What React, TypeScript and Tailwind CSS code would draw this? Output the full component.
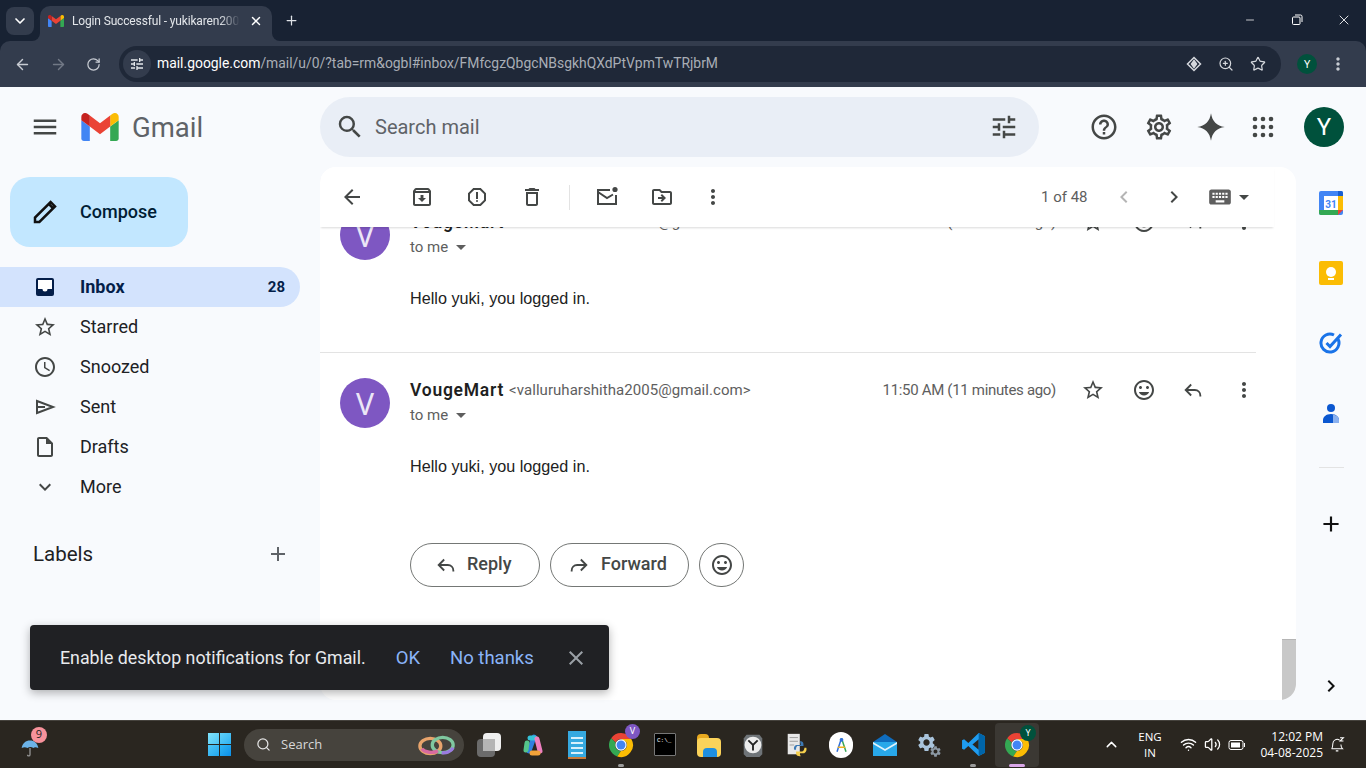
import { MdArrowBack, MdArrowDropDown, MdChevronLeft, MdChevronRight, MdClose, MdExpandMore, MdKeyboard, MdMenu, MdMoreVert, MdOutlineArchive, MdOutlineDelete, MdOutlineDriveFileMove, MdOutlineHelpOutline, MdOutlineInsertDriveFile, MdOutlineInsertEmoticon, MdOutlineReport, MdOutlineSettings, MdOutlineStarBorder, MdAccessTime, MdOutlineTune, MdSearch, MdAdd, MdSettings } from 'react-icons/md';
import { ChevronDown, ChevronUp, Plus, X, Minus, Search as SearchIcon, ArrowLeft, ArrowRight, RotateCw, Star, ZoomIn, Wifi, Volume2 } from 'lucide-react';

const sans = "font-['Roboto',sans-serif]";
const ui = "font-['Open_Sans',sans-serif]";

function GmailLogo() {
  return (
    <svg viewBox="52 42 88 66" className="h-[28px] w-[38px]">
      <path fill="#4285f4" d="M58 108h14V74L52 59v43c0 3.32 2.69 6 6 6" />
      <path fill="#34a853" d="M120 108h14c3.32 0 6-2.69 6-6V59l-20 15" />
      <path fill="#fbbc04" d="M120 48v26l20-15v-8c0-7.42-8.47-11.65-14.4-7.2" />
      <path fill="#ea4335" d="M72 74V48l24 18 24-18v26L96 92" />
      <path fill="#c5221f" d="M52 51v8l20 15V48l-5.6-4.2c-5.94-4.45-14.4-.22-14.4 7.2" />
    </svg>
  );
}

function ChromeLogo({ size = 26 }: { size?: number }) {
  return (
    <svg viewBox="0 0 48 48" width={size} height={size}>
      <path fill="#ea4335" d="M24 2a22 22 0 0 1 19 11H24a11 11 0 0 0-10 6.5L5.8 11.5A22 22 0 0 1 24 2z" />
      <path fill="#34a853" d="M5.8 11.5 14 19.5 A11 11 0 0 0 24 35 L17 45 A22 22 0 0 1 5.8 11.5z" />
      <path fill="#fbbc04" d="M43 13a22 22 0 0 1-26 32l7-10a11 11 0 0 0 9.5-16.5L24 13z" />
      <circle cx="24" cy="24" r="10.5" fill="#fff" />
      <circle cx="24" cy="24" r="8.2" fill="#4285f4" />
    </svg>
  );
}

function ReplyIcon({ className = '' }: { className?: string }) {
  return (
    <svg viewBox="0 0 24 24" className={className} fill="none" stroke="currentColor" strokeWidth="2">
      <path d="M10 6 4 12l6 6" />
      <path d="M4.5 12H14c3.5 0 6 2.5 6 6v1" />
    </svg>
  );
}

function ForwardIcon({ className = '' }: { className?: string }) {
  return (
    <svg viewBox="0 0 24 24" className={className} fill="none" stroke="currentColor" strokeWidth="2">
      <path d="m14 6 6 6-6 6" />
      <path d="M19.5 12H10c-3.5 0-6 2.5-6 6v1" />
    </svg>
  );
}

function UnreadIcon() {
  return (
    <svg viewBox="0 0 24 24" className="h-6 w-6 text-[#444746]" fill="none" stroke="currentColor" strokeWidth="2">
      <path d="M15 5H3v14h18v-9" />
      <path d="m3 7 9 6 6-3.5" />
      <circle cx="20" cy="4.5" r="2.6" fill="currentColor" stroke="none" />
    </svg>
  );
}

function Message({ divider }: { divider?: boolean }) {
  return (
    <div className={`flex w-[936px] shrink-0 pt-[25px] ${divider ? 'h-[168px] border-b border-[#e3e3e3]' : 'h-[190px]'}`}>
      <div className="ml-5 mr-5 flex h-[50px] w-[50px] shrink-0 items-center justify-center rounded-full bg-[#7e57c2] text-[30px] text-[#ece6f6]">V</div>
      <div className="flex-1">
        <div className="flex h-6 items-center">
          <span className={`${sans} text-[17.5px] font-semibold tracking-[0.75px] text-[#1f1f1f]`}>VougeMart</span>
          <span className={`${sans} ml-[5px] text-[15px] tracking-[0.05px] text-[#5e5e5e]`}>&lt;valluruharshitha2005@gmail.com&gt;</span>
          <span className={`${sans} ml-auto text-[15px] tracking-[-0.32px] text-[#5e5e5e]`}>11:50 AM (11 minutes ago)</span>
          <div className="ml-[24px] flex w-[176px] shrink-0 items-center text-[#444746]">
            <MdOutlineStarBorder className="ml-[1px] h-6 w-6" />
            <MdOutlineInsertEmoticon className="ml-[27px] h-6 w-6" />
            <ReplyIcon className="ml-[26px] h-[22px] w-[22px]" />
            <MdMoreVert className="ml-[28px] h-6 w-6" />
          </div>
        </div>
        <div className={`${sans} flex h-[26px] items-center text-[15px] text-[#5e5e5e]`}>
          to me
          <MdArrowDropDown className="ml-[1px] h-6 w-6" />
        </div>
        <p className="mt-[28px] font-['Liberation_Sans',sans-serif] text-[16.2px] leading-[20px] text-[#222222]">Hello yuki, you logged in.</p>
      </div>
    </div>
  );
}

function NavItem({ icon, label }: { icon: React.ReactNode; label: string }) {
  return (
    <div className="flex h-10 w-[300px] items-center">
      <div className="flex w-[80px] justify-center pl-[10px] text-[#444746]">{icon}</div>
      <span className={`${sans} -mt-px text-[18px] text-[#202124]`}>{label}</span>
    </div>
  );
}

function TaskIcon({ children, dot, active }: { children: React.ReactNode; dot?: boolean; active?: boolean }) {
  return (
    <div className={`relative flex h-[44px] w-11 items-center justify-center rounded ${active ? 'bg-[#3b3833]' : ''}`}>
      {children}
      {dot && <span className="absolute bottom-[0px] h-[3px] w-[6px] rounded-full bg-[#9b9b9b]" />}
      {active && <span className="absolute bottom-[0px] h-[3px] w-4 rounded-full bg-[#d9a6e8]" />}
    </div>
  );
}

function BrowserChrome() {
  return (
    <div className="h-[87px] shrink-0 bg-[#182233]">
      <div className="flex h-[41px] items-end pl-[6px]">
        <div className="mb-[6px] flex h-[28px] w-[28px] items-center justify-center rounded-lg bg-[#333c4d] text-white">
          <ChevronDown className="h-4 w-4" strokeWidth={2.5} />
        </div>
        <div className="relative ml-[6px] flex h-[35px] w-[232px] items-center rounded-t-[10px] bg-[#333c4d] pb-[6px] pl-[8px]">
          <div className="absolute bottom-0 left-[-8px] h-2 w-2 overflow-hidden"><div className="h-4 w-4 -translate-x-2 -translate-y-2 rounded-full shadow-[0_0_0_8px_#333c4d]" /></div>
          <div className="absolute bottom-0 right-[-8px] h-2 w-2 overflow-hidden"><div className="h-4 w-4 -translate-y-2 rounded-full shadow-[0_0_0_8px_#333c4d]" /></div>
          <svg viewBox="52 42 88 66" className="h-[12px] w-[16px]">
            <path fill="#4285f4" d="M58 108h14V74L52 59v43c0 3.32 2.69 6 6 6" />
            <path fill="#34a853" d="M120 108h14c3.32 0 6-2.69 6-6V59l-20 15" />
            <path fill="#fbbc04" d="M120 48v26l20-15v-8c0-7.42-8.47-11.65-14.4-7.2" />
            <path fill="#ea4335" d="M72 74V48l24 18 24-18v26L96 92" />
            <path fill="#c5221f" d="M52 51v8l20 15V48l-5.6-4.2c-5.94-4.45-14.4-.22-14.4 7.2" />
          </svg>
          <span className={`${sans} ml-2 w-[168px] overflow-hidden whitespace-nowrap text-[12px] tracking-[-0.15px] text-[#e3e6ea] [mask-image:linear-gradient(90deg,#000_88%,transparent)]`}>Login Successful - yukikaren2005@gmail.com</span>
          <X className="ml-[9px] h-[14px] w-[14px] text-white" strokeWidth={2.5} />
        </div>
        <Plus className="mb-[13px] ml-[12px] h-[15px] w-[15px] text-[#dfe3e8]" strokeWidth={2} />
        <div className="ml-auto mb-[13px] flex items-center text-white">
          <Minus className="h-[12px] w-[12px]" strokeWidth={1.5} />
          <svg viewBox="0 0 12 12" className="ml-[35px] h-3 w-3" fill="none" stroke="currentColor"><rect x="1.5" y="3" width="7.5" height="7.5" rx="1" /><path d="M4 1h5.5a1.5 1.5 0 0 1 1.5 1.5V8" /></svg>
          <X className="ml-[33px] mr-[14px] h-[16px] w-[16px]" strokeWidth={1.3} />
        </div>
      </div>
      <div className="flex h-[46px] items-center rounded-t-[10px] bg-[#333c4d] pl-[14px]">
        <ArrowLeft className="h-[17px] w-[17px] text-[#c8ccd3]" strokeWidth={2} />
        <ArrowRight className="ml-[19px] h-[17px] w-[17px] text-[#727986]" strokeWidth={2} />
        <RotateCw className="ml-[19px] h-[15px] w-[15px] text-[#c8ccd3]" strokeWidth={2} />
        <div className="ml-[18px] flex h-[36px] w-[1162px] items-center rounded-full bg-[#1f2838] pl-[4px]">
          <div className="flex h-[28px] w-[28px] items-center justify-center rounded-full bg-[#333c4d]">
            <MdOutlineTune className="h-4 w-4 text-[#e3e6ea]" />
          </div>
          <span className={`${sans} mb-[2px] ml-[6px] text-[13.9px] text-[#a9aeb6]`}><span className="text-white">mail.google.com</span>/mail/u/0/?tab=rm&amp;ogbl#inbox/FMfcgzQbgcNBsgkhQXdPtVpmTwTRjbrM</span>
          <div className="ml-auto mr-[15px] flex items-center text-[#d5d8dd]">
            <svg viewBox="0 0 16 16" className="h-4 w-4" fill="none" stroke="currentColor" strokeWidth="1.5"><path d="M8 1.5 14.5 8 8 14.5 1.5 8z" /><path d="M8 4.5 10.5 8 8 11.5 5.5 8z" fill="currentColor" /></svg>
            <ZoomIn className="ml-[16px] h-[16px] w-[16px]" strokeWidth={1.8} />
            <Star className="ml-[16px] h-[16px] w-[16px]" strokeWidth={1.8} />
          </div>
        </div>
        <div className="ml-[16px] flex h-5 w-5 items-center justify-center rounded-full bg-[#00513c] text-[11px] text-white">Y</div>
        <MdMoreVert className="ml-[11px] h-[20px] w-[20px] text-[#c8ccd3]" />
      </div>
    </div>
  );
}

function Taskbar() {
  return (
    <div className="flex h-12 shrink-0 items-center border-t border-[#45423d] bg-[#2a2620] text-white">
      <div className="relative ml-[20px] w-[188px] shrink-0">
        <svg viewBox="0 0 22 24" className="mt-[6px] h-[20px] w-[20px]" fill="none"><path d="M1 12C2 6 6 3 11 3s9 3 10 9c-3-1.500-5-1-6 0-2-1.500-5-1.500-7 0-2-1-4-1.500-7 0z" fill="#6cb3e8" /><path d="M11 12v8c0 2 -3 2-3 0" stroke="#999" strokeWidth="1.500" /></svg>
        <span className="absolute left-[11px] top-[-5px] flex h-4 w-4 items-center justify-center rounded-full bg-[#f7929b] font-['Open_Sans',sans-serif] text-[11px] text-[#222]">9</span>
      </div>
      <div className="grid h-[23px] w-[23px] shrink-0 grid-cols-2 gap-[1px]">
        <span className="bg-gradient-to-br from-[#7fe3fb] to-[#4cc4f5]" />
        <span className="bg-gradient-to-br from-[#5fd0f8] to-[#2cb2f2]" />
        <span className="bg-gradient-to-br from-[#4ec6f6] to-[#1fa8f0]" />
        <span className="bg-gradient-to-br from-[#2eb6f3] to-[#0a8fe8]" />
      </div>
      <div className="ml-[13px] flex h-8 w-[220px] shrink-0 items-center rounded-full bg-[#46433d] pl-[12px]">
        <SearchIcon className="h-[15px] w-[15px] text-[#e5e5e5]" strokeWidth={2} />
        <span className={`${ui} ml-[10px] text-[13px] text-[#d8d8d8]`}>Search</span>
        <svg viewBox="0 0 40 24" className="ml-auto mr-[8px] h-[24px] w-[38px]" fill="none" strokeWidth="3.500">
          <ellipse cx="13" cy="13" rx="11" ry="8" stroke="#e8a46c" />
          <ellipse cx="26" cy="12" rx="11" ry="8" stroke="#7fc8a0" />
          <path d="M4 16c3 4 12 5 17 2" stroke="#d86aa0" />
          <path d="M25 20c4 1 10-1 12-5" stroke="#9a7ae0" />
        </svg>
      </div>
      <div className="ml-[3px] flex shrink-0 items-center">
        <TaskIcon>
          <div className="relative h-[24px] w-[24px]">
            <span className="absolute bottom-0 left-0 h-[18px] w-[18px] rounded-sm bg-[#6b6b6b]" />
            <span className="absolute right-0 top-0 h-[18px] w-[18px] rounded-sm bg-[#efefef]" />
            <span className="absolute left-[6px] top-[6px] h-[12px] w-[12px] bg-[#b5b5b5]" />
          </div>
        </TaskIcon>
        <TaskIcon>
          <svg viewBox="0 0 24 24" className="h-[24px] w-[24px]" fill="none" strokeWidth="5" strokeLinecap="round">
            <path d="M13 4 8 18" stroke="#2f7fe0" />
            <path d="M9 5h5" stroke="#35c2d8" />
            <path d="M16 6 19 18" stroke="#ee7fc0" />
            <path d="M11 20h6" stroke="#f2a33a" />
            <path d="M6 10 5 17" stroke="#55c58a" />
          </svg>
        </TaskIcon>
        <TaskIcon>
          <div className="flex h-[28px] w-[18px] flex-col gap-[3px] border-b-2 border-[#c97a3a] bg-[#36a9e0] px-[3px] pt-[6px]">
            <span className="h-[2px] bg-[#d8f0fb]" /><span className="h-[2px] bg-[#d8f0fb]" /><span className="h-[2px] bg-[#d8f0fb]" /><span className="h-[2px] bg-[#d8f0fb]" />
          </div>
        </TaskIcon>
        <TaskIcon dot>
          <ChromeLogo />
          <span className="absolute right-[3px] top-[1px] flex h-[15px] w-[15px] items-center justify-center rounded-full bg-[#7e57c2] text-[9px]">V</span>
        </TaskIcon>
        <TaskIcon>
          <div className="h-[23px] w-[22px] rounded-[1px] border border-[#777] bg-black pl-[2px] pt-[1px] font-['Liberation_Mono',monospace] text-[6px] leading-[12px] text-white">C:\_</div>
        </TaskIcon>
        <TaskIcon>
          <div className="relative h-[24px] w-[24px]">
            <span className="absolute left-0 top-[1px] h-[8px] w-[12px] rounded-t-sm bg-[#e8a91f]" />
            <span className="absolute bottom-0 left-0 top-[5px] w-[24px] rounded-sm bg-[#fbd35a]" />
            <span className="absolute bottom-0 left-[6px] h-[9px] w-[14px] rounded-t-sm bg-[#1f8fe0]" />
          </div>
        </TaskIcon>
        <TaskIcon>
          <svg viewBox="0 0 24 28" className="h-[26px] w-[24px]">
            <path d="M5 3h14l3 4v17l-3 3H5l-3-3V7z" fill="#6f7478" />
            <circle cx="12" cy="14" r="9" fill="#ececec" />
            <path d="M7 9l5 5 5-5M12 14v6" stroke="#222" strokeWidth="2" fill="none" />
          </svg>
        </TaskIcon>
        <TaskIcon>
          <svg viewBox="0 0 24 28" className="h-[26px] w-[24px]">
            <path d="M2 2h13v22H2z" fill="#e8e8e8" />
            <path d="M4 6h9M4 10h9M4 14h5" stroke="#999" />
            <path d="M15 10c4 0 4 2 4 5h-6c-2 0-2 3-2 4h-2c-1-3 1-5 3-5h4c0-2-1-4-1-4z" fill="#3d7ab5" />
            <path d="M15 26c-4 0-4-2-4-5h6c2 0 3-2 3-4h2c1 3-1 6-3 6h-4c0 2 1 3 1 3z" fill="#f6d04d" />
          </svg>
        </TaskIcon>
        <TaskIcon>
          <div className="flex h-[26px] w-[24px] items-center justify-center rounded-full bg-white">
            <svg viewBox="0 0 20 24" className="h-[18px] w-[15px]" fill="none" strokeWidth="2"><path d="M10 3 4 21" stroke="#2f6fdb" /><path d="m10 3 6 18" stroke="#3aa757" /><path d="M5 15h10" stroke="#f2b01e" /><circle cx="10" cy="5" r="2.500" fill="#2f6fdb" /></svg>
          </div>
        </TaskIcon>
        <TaskIcon>
          <svg viewBox="0 0 24 24" className="h-[26px] w-[24px]">
            <path d="M12 1 24 9v14H0V9z" fill="#0f6cbd" />
            <path d="M0 9h24v14H0z" fill="#28a8ea" />
            <path d="M0 9l12 7 12-7v2l-12 7L0 11z" fill="#dff3fd" />
          </svg>
        </TaskIcon>
        <TaskIcon>
          <div className="relative h-[26px] w-[26px]">
            <MdSettings className="absolute left-0 top-0 h-[21px] w-[21px] text-[#a9c4dc]" />
            <MdSettings className="absolute bottom-0 right-0 h-[13px] w-[13px] text-[#8d9aa6]" />
          </div>
        </TaskIcon>
        <TaskIcon dot>
          <svg viewBox="0 0 24 24" className="h-[25px] w-[25px]">
            <path d="M17 1 23 4v16l-6 3L7 13.500 3 17l-2-1V8l2-1 4 3.500z" fill="#1f9cf0" />
            <path d="M17 7 11 12l6 5z" fill="#2a2620" />
            <path d="M17 1 23 4v16l-6 3z" fill="#0065a9" />
          </svg>
        </TaskIcon>
        <TaskIcon active>
          <ChromeLogo />
          <span className="absolute right-[3px] top-[2px] flex h-[16px] w-[16px] items-center justify-center rounded-full bg-[#00513c] text-[9px]">Y</span>
        </TaskIcon>
      </div>
      <ChevronUp className="ml-[64px] h-[17px] w-[17px]" strokeWidth={2} />
      <div className={`${ui} ml-[15px] w-[30px] text-center text-[11.5px] leading-[16px]`}>ENG<br />IN</div>
      <Wifi className="ml-[15px] h-[17px] w-[17px]" strokeWidth={2} />
      <Volume2 className="ml-[7px] h-[17px] w-[17px]" strokeWidth={1.8} />
      <svg viewBox="0 0 18 12" className="ml-[7px] h-3 w-[18px]" fill="none" stroke="currentColor"><rect x="1" y="1.500" width="14" height="9" rx="2" /><rect x="3" y="3.500" width="9" height="5" fill="currentColor" stroke="none" /><path d="M16.500 4v4" /></svg>
      <div className={`${ui} ml-[14px] w-[63px] whitespace-nowrap text-right text-[12px] leading-[16px]`}>12:02 PM<br />04-08-2025</div>
      <svg viewBox="0 0 20 20" className="ml-[6px] h-[17px] w-[17px]" fill="none" stroke="currentColor" strokeWidth="1.200"><path d="M3 15c1.500-1.500 1.500-3 1.500-6a5 5 0 0 1 8-4M3 15h13c-1-1-2-2-2-5M8 17.500h3" /><path d="M13 2h4l-4 4h4" /></svg>
    </div>
  );
}

export default function App() {
  return (
    <div className="flex h-screen w-[1366px] flex-col overflow-hidden bg-[#f8fafd]">
      <BrowserChrome />

      <div className="relative flex min-h-0 flex-1 flex-col">
        {/* top bar */}
        <div className="flex h-[80px] shrink-0 items-center">
          <div className="flex w-[320px] shrink-0 items-center">
            <MdMenu className="ml-[30px] h-[30px] w-[30px] text-[#444746]" />
            <div className="ml-[21px]"><GmailLogo /></div>
            <span className={`${sans} ml-[13px] mt-[1px] text-[27.5px] text-[#5f6368]`}>Gmail</span>
          </div>
          <div className="flex h-[60px] w-[719px] items-center rounded-full bg-[#e9eef6]">
            <MdSearch className="ml-[15px] h-[30px] w-[30px] text-[#444746]" />
            <span className={`${sans} ml-[10px] text-[20px] text-[#5f6368]`}>Search mail</span>
            <MdOutlineTune className="ml-auto mr-[20px] h-[30px] w-[30px] text-[#444746]" />
          </div>
          <MdOutlineHelpOutline className="ml-[50px] h-[30px] w-[30px] text-[#444746]" />
          <MdOutlineSettings className="ml-[25px] h-[30px] w-[30px] text-[#444746]" />
          <svg viewBox="0 0 24 24" className="ml-[22px] h-[30px] w-[30px] text-[#444746]" fill="currentColor"><path d="M12 1c1 6.500 4.500 10 11 11-6.500 1-10 4.500-11 11-1-6.500-4.500-10-11-11 6.500-1 10-4.500 11-11z" /></svg>
          <svg viewBox="0 0 24 24" className="ml-[25px] h-[24px] w-[24px] text-[#444746]" fill="currentColor">
            <circle cx="4" cy="4" r="2.300" /><circle cx="12" cy="4" r="2.300" /><circle cx="20" cy="4" r="2.300" />
            <circle cx="4" cy="12" r="2.300" /><circle cx="12" cy="12" r="2.300" /><circle cx="20" cy="12" r="2.300" />
            <circle cx="4" cy="20" r="2.300" /><circle cx="12" cy="20" r="2.300" /><circle cx="20" cy="20" r="2.300" />
          </svg>
          <div className={`${sans} ml-[29px] flex h-10 w-10 items-center justify-center rounded-full bg-[#00513c] text-[24px] text-white`}>Y</div>
        </div>

        <div className="flex min-h-0 flex-1">
          {/* left nav */}
          <div className="w-[320px] shrink-0 pt-[10px]">
            <div className="ml-[10px] flex h-[70px] w-[178px] items-center rounded-[20px] bg-[#c2e7ff]">
              <svg viewBox="0 0 24 24" className="ml-[20px] h-[30px] w-[30px] text-[#111]" fill="none" stroke="currentColor" strokeWidth="2"><path d="M4 20v-3.500L16.500 4l3.500 3.500L7.500 20z" /><path d="m15 5.500 3.500 3.500" /></svg>
              <span className={`${sans} -mt-px ml-[20px] text-[18px] font-medium text-[#001d35]`}>Compose</span>
            </div>
            <div className="mt-[20px]">
              <div className="flex h-10 w-[300px] items-center rounded-r-full bg-[#d3e3fd]">
                <svg viewBox="0 0 24 24" className="ml-[33px] h-[24px] w-[24px]">
                  <rect x="3" y="3" width="18" height="18" rx="2" fill="#041e49" />
                  <path d="M5 5h14v9h-4.500a2.500 2.500 0 0 1-5 0H5z" fill="#fff" />
                </svg>
                <span className={`${sans} -mt-px ml-[23px] text-[18px] font-bold text-[#041e49]`}>Inbox</span>
                <span className={`${sans} ml-auto mr-[15px] text-[15px] font-bold text-[#041e49]`}>28</span>
              </div>
              <NavItem icon={<MdOutlineStarBorder className="h-6 w-6" />} label="Starred" />
              <NavItem icon={<MdAccessTime className="h-6 w-6" />} label="Snoozed" />
              <NavItem icon={<svg viewBox="0 0 24 24" className="h-6 w-6" fill="none" stroke="currentColor" strokeWidth="2"><path d="M4 6 20 12 4 18z" /><path d="M4 12h8" /></svg>} label="Sent" />
              <NavItem icon={<MdOutlineInsertDriveFile className="h-6 w-6" />} label="Drafts" />
              <NavItem icon={<MdExpandMore className="h-6 w-6" />} label="More" />
            </div>
            <div className="mt-[32px] flex w-[300px] items-center pl-[33px]">
              <span className={`${sans} text-[20.5px] text-[#202124]`}>Labels</span>
              <MdAdd className="ml-auto mr-[10px] h-[24px] w-[24px] text-[#5f6368]" />
            </div>
          </div>

          {/* mail card */}
          <div className="mb-5 flex h-[533px] w-[976px] shrink-0 flex-col overflow-hidden rounded-2xl bg-white">
            <div className="relative z-10 flex h-[60px] w-[954px] shrink-0 items-center bg-white shadow-[0_2px_2px_-1px_rgba(0,0,0,0.15)]">
              <MdArrowBack className="ml-[20px] h-6 w-6 text-[#444746]" />
              <MdOutlineArchive className="ml-[46px] h-6 w-6 text-[#444746]" />
              <MdOutlineReport className="ml-[31px] h-6 w-6 text-[#444746]" />
              <MdOutlineDelete className="ml-[31px] h-6 w-6 text-[#444746]" />
              <span className="ml-[25px] h-[25px] w-px bg-[#e3e3e3]" />
              <div className="ml-[25px]"><UnreadIcon /></div>
              <MdOutlineDriveFileMove className="ml-[31px] h-6 w-6 text-[#444746]" />
              <MdMoreVert className="ml-[27px] h-6 w-6 text-[#444746]" />
              <span className={`${sans} ml-[316px] text-[15px] text-[#5e5e5e]`}>1 of 48</span>
              <MdChevronLeft className="ml-[24px] h-6 w-6 text-[#b5b5b5]" />
              <MdChevronRight className="ml-[26px] h-6 w-6 text-[#444746]" />
              <MdKeyboard className="ml-[21px] h-[26px] w-[26px] text-[#5e5e5e]" />
              <MdArrowDropDown className="ml-[-1px] h-[24px] w-[24px] text-[#444746]" />
            </div>
            <div className="relative min-h-0 flex-1 overflow-hidden">
              <div className="mt-[-42px]">
                <Message divider />
                <Message />
                <div className="ml-[90px] flex gap-[10px]">
                  <div className={`${sans} flex h-[44px] w-[130px] items-center rounded-full border border-[#747775] text-[18px] font-medium text-[#444746]`}>
                    <ReplyIcon className="ml-[24px] h-[22px] w-[22px]" />
                    <span className="mb-[3px] ml-[10px]">Reply</span>
                  </div>
                  <div className={`${sans} flex h-[44px] w-[139px] items-center rounded-full border border-[#747775] text-[18px] font-medium text-[#444746]`}>
                    <ForwardIcon className="ml-[17px] h-[22px] w-[22px]" />
                    <span className="mb-[3px] ml-[11px]">Forward</span>
                  </div>
                  <div className="flex h-[44px] w-[45px] items-center justify-center rounded-full border border-[#747775]">
                    <MdOutlineInsertEmoticon className="h-6 w-6 text-[#444746]" />
                  </div>
                </div>
              </div>
              <div className="absolute bottom-0 right-0 h-[61px] w-[14px] rounded-br-2xl border-t border-[#b5b5b5] bg-[#c8c8c8]" />
            </div>
          </div>

          {/* right rail */}
          <div className="flex flex-1 flex-col items-center pt-[24px]">
            <svg viewBox="0 0 24 24" className="h-6 w-6">
              <rect width="24" height="24" rx="2" fill="#4285f4" />
              <rect x="5" y="5" width="14" height="14" fill="#fff" />
              <path d="M19 5h5v14h-5z" fill="#fbbc04" />
              <path d="M0 19h19v5H2a2 2 0 0 1-2-2z" fill="#34a853" />
              <path d="M19 19h5l-5 5z" fill="#ea4335" />
              <path d="M19 0h3a2 2 0 0 1 2 2v3h-5z" fill="#1a5fd0" />
              <text x="12" y="16.500" textAnchor="middle" fontSize="10" fontWeight="700" fill="#4285f4" fontFamily="Roboto">31</text>
            </svg>
            <div className="mt-[46px] flex h-6 w-6 flex-col items-center justify-center rounded-[2px] bg-[#fbbc04]">
              <span className="h-[10px] w-[10px] rounded-full bg-white" />
              <span className="mt-[1px] h-[2px] w-[6px] bg-white" />
            </div>
            <svg viewBox="0 0 24 24" className="mt-[46px] h-6 w-6" fill="none" stroke="#1a73e8" strokeWidth="3"><path d="M19 8a9 9 0 1 1-4-4" /><path d="m7.500 12 3.500 3.500L22 3.500" /></svg>
            <svg viewBox="0 0 24 24" className="mt-[46px] h-6 w-6">
              <circle cx="12" cy="7" r="4" fill="#0b57d0" />
              <path d="M4 22v-3c0-3 3-6 8-6s8 3 8 6v3z" fill="#0b57d0" />
              <path d="M14 13.500c3.500.5 6 2.500 6 5.500v3h-6z" fill="#8ab0ee" />
            </svg>
            <span className="mt-[42px] h-px w-[25px] bg-[#e3e3e3]" />
            <MdAdd className="mt-[43px] h-[26px] w-[26px] text-[#111]" />
            <MdChevronRight className="mt-[137px] h-6 w-6 text-[#111]" />
          </div>
        </div>

        {/* notification toast */}
        <div className="absolute left-[30px] top-[538px] flex h-[65px] w-[579px] items-center rounded bg-[#202124] pl-[30px] shadow-[0_3px_10px_rgba(0,0,0,0.3)]">
          <span className={`${sans} mt-px text-[17.8px] text-[#e8eaed]`}>Enable desktop notifications for Gmail.</span>
          <span className={`${sans} mt-[2px] ml-[30px] text-[18.5px] text-[#8ab4f8]`}>OK</span>
          <span className={`${sans} mt-[2px] ml-[30px] text-[18.5px] text-[#8ab4f8]`}>No thanks</span>
          <MdClose className="ml-[30px] h-[24px] w-[24px] text-[#9aa0a6]" />
        </div>
      </div>

      <Taskbar />
    </div>
  );
}
